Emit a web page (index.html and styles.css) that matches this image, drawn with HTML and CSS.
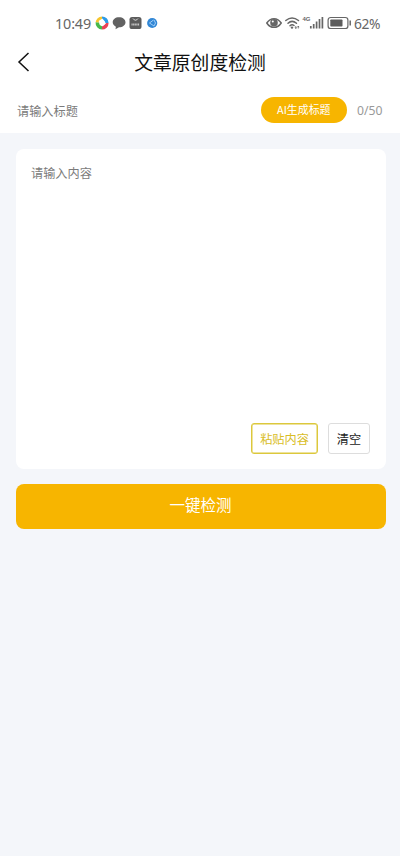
FILE: index.html
```html
<!DOCTYPE html>
<html lang="zh-CN">
<head>
<meta charset="utf-8">
<meta name="viewport" content="width=device-width, initial-scale=1">
<title>文章原创度检测</title>
<link rel="stylesheet" href="styles.css">
</head>
<body>
<header class="top">
  <div class="status">
    <span class="time">10:49</span>
    <svg class="notices" width="64" height="16" viewBox="0 0 64 16">
      <g fill="none" stroke-width="3.6">
        <path d="M2.400 7.500A4.800 4.800 0 0 1 7 3.200" stroke="#f6c52c"/>
        <path d="M7 3.200A4.800 4.800 0 0 1 11.800 8" stroke="#2d9be8"/>
        <path d="M11.800 8A4.800 4.800 0 0 1 7 12.800" stroke="#e94357"/>
        <path d="M7 12.800A4.800 4.800 0 0 1 2.400 7.500" stroke="#46b84b"/>
      </g>
      <path d="M3.500 6l4-2.500 3.500 5-4 3z" fill="#fff"/>
      <path d="M24 2.300c3.800 0 6.500 2.100 6.500 5s-2.700 5-6.500 5l-3.500 2 .4-2.600c-2-.9-3.200-2.500-3.200-4.400 0-2.900 2.600-5 6.300-5z" fill="#626262"/>
      <rect x="34.500" y="2" width="12" height="12" rx="2.600" fill="#5c5c5c"/>
      <path d="M38 3.500q2.500 3.500 5 0" fill="none" stroke="#ddd" stroke-width="1"/>
      <path d="M36.500 9.500h8" stroke="#c6c6c6" stroke-width="1.800" stroke-dasharray="1.200 .4"/>
      <circle cx="57.200" cy="8" r="5.100" fill="#3287d5"/>
      <path d="M54.500 8l4-3M54.500 8l4.500 3M59 5l1.500 3-1.500 3" fill="none" stroke="#acd5fa" stroke-width=".9"/>
    </svg>
    <svg class="signals" width="86" height="18" viewBox="0 0 86 18">
      <path d="M.8 9C4.500 3.200 11.500 3.200 15.200 9 11.500 14.800 4.500 14.800.8 9z" fill="none" stroke="#666" stroke-width="1.500"/>
      <circle cx="8" cy="8.800" r="3.800" fill="#666"/><circle cx="6.800" cy="7.500" r="1" fill="#fff"/>
      <g fill="none" stroke="#666" stroke-width="1.500" stroke-linecap="round">
        <path d="M19.800 6.500Q26 1.500 32.500 6.500M22 9.300Q26 5.500 30.500 9.300M24 11.800Q26 9.800 28 11.500"/>
      </g>
      <circle cx="26" cy="13.600" r="1.200" fill="#666"/>
      <path d="M29.800 14.500v-2.500M32.300 12v2.500M29.100 13.300l.7 1.200.7-1.200M31.600 13.200l.7-1.200.7 1.200" fill="none" stroke="#666" stroke-width=".8"/>
      <text class="net" x="36.500" y="7.200">4G</text>
      <path d="M44.800 12v2.500M47.700 10v4.500M50.600 7.500v7M53.500 5v9.500M56.400 3v11.500" stroke="#666" stroke-width="1.700"/>
      <rect x="62.100" y="3.500" width="19.800" height="11" rx="2.600" fill="none" stroke="#666" stroke-width="1.200"/>
      <rect x="64.300" y="5.500" width="12.200" height="7" rx=".8" fill="#5c5c5c"/>
      <path d="M84.200 6.500v5" stroke="#666" stroke-width="1.500"/>
    </svg>
    <span class="percent">62%</span>
  </div>
  <div class="nav">
    <svg class="back" width="14" height="20" viewBox="0 0 14 20"><path d="M11.500 1L2 10l9.500 9" fill="none" stroke="#111" stroke-width="1.500"/></svg>
    <h1>文章原创度检测</h1>
  </div>
  <div class="title-row">
    <span class="hint">请输入标题</span>
    <button class="generate">AI生成标题</button>
    <span class="count">0/50</span>
  </div>
</header>
<main>
  <section class="card">
    <div class="hint">请输入内容</div>
    <div class="actions">
      <button class="small paste">粘贴内容</button>
      <button class="small">清空</button>
    </div>
  </section>
  <button class="submit">一键检测</button>
</main>
</body>
</html>
```
FILE: styles.css
```css
* { box-sizing: border-box; }
body {
  margin: 0;
  min-height: 856px;
  background: #f4f6fa;
  color: #111;
  font-family: "Noto Sans CJK SC", sans-serif;
}
button {
  padding: 0;
  border: 0;
  font-family: inherit;
  white-space: nowrap;
}
.top { height: 133.4px; background: #fff; }
.status {
  display: flex;
  align-items: center;
  height: 46px;
  padding: 0 18px 0 55px;
  color: #666;
  font: 14.4px/18px "Noto Sans", sans-serif;
}
.time { width: 40px; padding-top: 2px; letter-spacing: -.15px; }
.notices { flex: none; }
.signals { flex: none; margin-left: 107px; }
.net { font: 700 6px "Liberation Sans", sans-serif; fill: #666; }
.percent { margin-left: 2px; padding-top: 2px; font-size: 13.8px; letter-spacing: -.4px; }
.nav {
  display: grid;
  grid-template-columns: 40px 1fr 40px;
  align-items: center;
  height: 32px;
}
.back { margin-left: 17px; }
h1 {
  margin: 0;
  font-size: 18.8px;
  line-height: 28px;
  font-weight: 400;
  text-align: center;
}
.title-row {
  display: flex;
  align-items: center;
  height: 64px;
  padding: 0 17px;
}
.hint { color: #7b7b7b; font-size: 12.2px; line-height: 18px; }
.title-row .hint { padding-top: 1px; }
.generate {
  width: 86.5px;
  height: 26.6px;
  margin-left: auto;
  padding-bottom: 2px;
  border-radius: 14px;
  background: #f7b500;
  color: #fff;
  font-size: 10.9px;
}
.count {
  width: 26px;
  margin-left: 10px;
  padding-top: 2px;
  color: #999;
  font: 12.2px/18px "Noto Sans", sans-serif;
}
main { padding: 15.6px 14.5px 0 15.5px; }
.card {
  display: flex;
  flex-direction: column;
  justify-content: space-between;
  height: 320.5px;
  padding: 15px 15.5px;
  border-radius: 8px;
  background: #fff;
}
.actions { display: flex; justify-content: flex-end; gap: 10px; }
.small {
  width: 42px;
  height: 31px;
  border: 1px solid #ddd;
  border-radius: 3px;
  background: #fff;
  color: #222;
  font-size: 12.2px;
}
.paste { width: 67px; border-color: #dcc83c; color: #d9bd26; box-shadow: inset 0 0 0 .5px #dcc83c; }
.submit {
  display: block;
  width: 100%;
  height: 44.5px;
  margin-top: 15px;
  padding-bottom: 6px;
  border-radius: 8px;
  background: #f7b500;
  color: #fff;
  font-size: 15.5px;
}
```
